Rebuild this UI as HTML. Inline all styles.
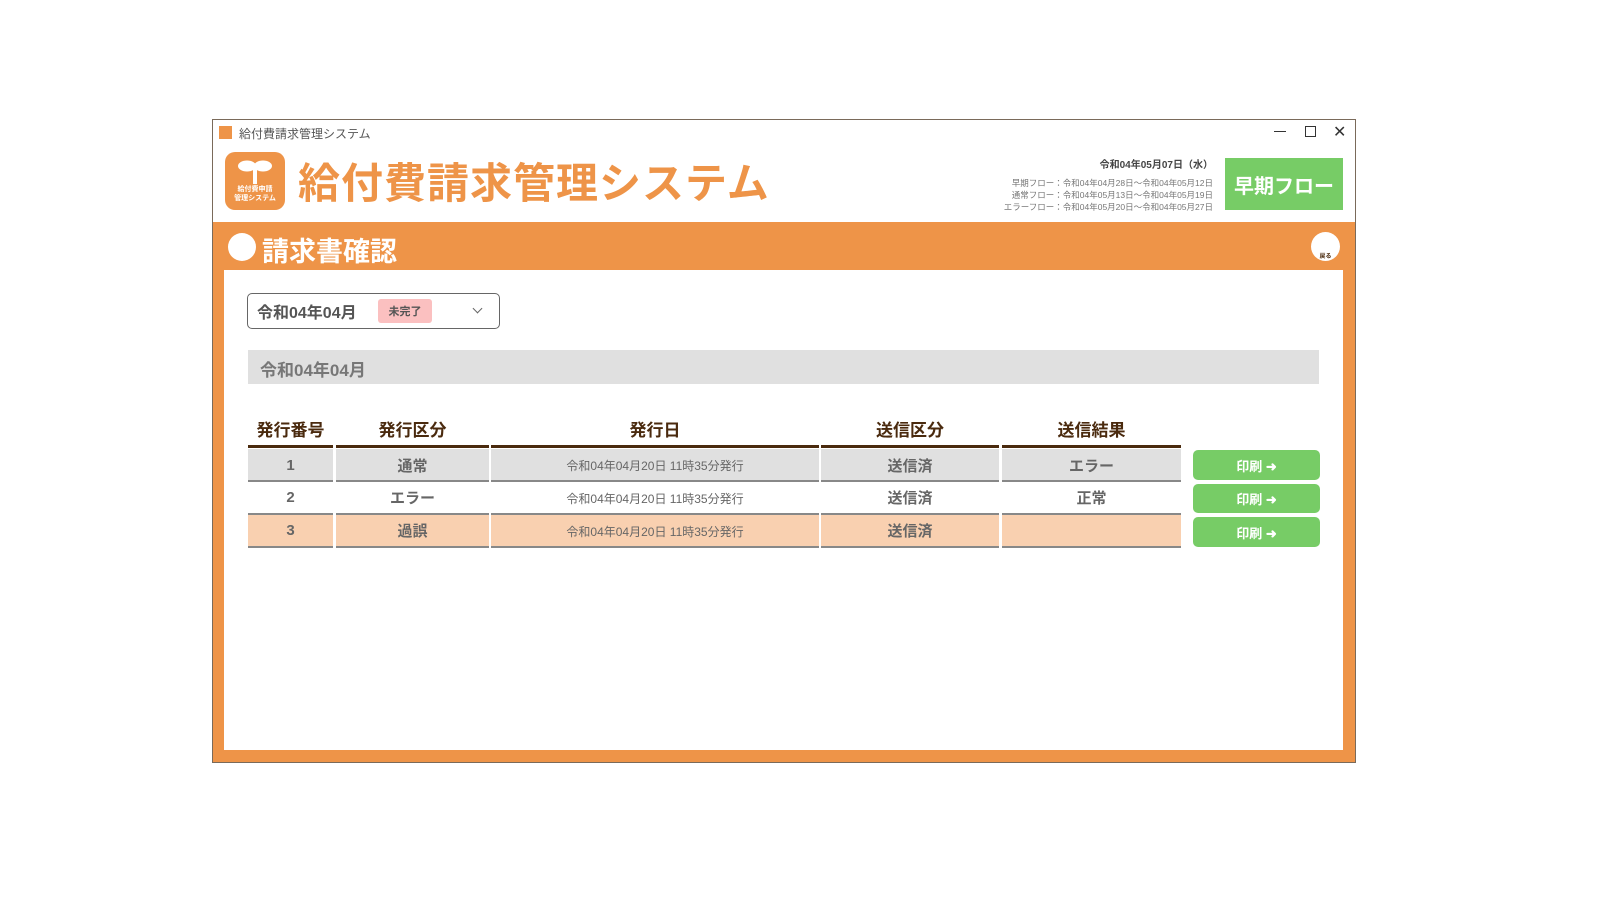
<!DOCTYPE html>
<html><head><meta charset="utf-8"><style>
*{margin:0;padding:0;box-sizing:border-box}
body{width:1600px;height:900px;background:#fff;position:relative;font-family:"Liberation Sans","Noto Sans CJK JP",sans-serif;overflow:hidden}
.a{position:absolute}
.win{left:212px;top:119px;width:1144px;height:644px;border:1px solid #7a6a5a;background:#fff}
.c{display:flex;align-items:center;justify-content:center;font-weight:bold}
.th{top:416px;height:24px;color:#4a2a0e;font-size:17px;font-weight:bold;text-align:center}
.hl{top:445px;height:3px;background:#4a2a0e}
.cell{position:absolute;display:flex;align-items:center;justify-content:center;color:#666;font-size:15px;font-weight:bold}
.d{font-weight:normal;font-size:12px;color:#666}
.btn{position:absolute;left:1193px;width:127px;background:#77cc66;border-radius:5px;color:#fff;font-size:13px;font-weight:bold;display:flex;align-items:center;justify-content:center}
</style></head><body>
<div class="a win"></div>
<div class="a" style="left:219px;top:126px;width:13px;height:13px;background:#ee9448"></div>
<div class="a" style="left:239px;top:125px;font-size:12px;color:#555">給付費請求管理システム</div>
<div class="a" style="left:1274px;top:131px;width:12px;height:1px;background:#333"></div>
<div class="a" style="left:1305px;top:126px;width:11px;height:11px;border:1px solid #333"></div>
<div class="a" style="left:1333px;top:122px;font-size:16px;color:#333">✕</div>
<div class="a c" style="left:225px;top:152px;width:60px;height:58px;background:#ee9448;border-radius:10px;flex-direction:column;color:#fff">
<svg width="36" height="26" viewBox="0 0 36 26"><ellipse cx="10" cy="7" rx="9" ry="5.5" fill="#fff"/><ellipse cx="26" cy="7" rx="9" ry="5.5" fill="#fff"/><rect x="16" y="6" width="4" height="19" fill="#fff"/></svg>
<div style="font-size:7px;line-height:9px;text-align:center">給付費申請<br>管理システム</div></div>
<div class="a" style="left:298px;top:150px;font-size:42px;font-weight:bold;color:#ee9448;letter-spacing:1px">給付費請求管理システム</div>
<div class="a" style="left:1000px;top:156px;width:213px;text-align:right;font-size:10px;font-weight:bold;color:#444">令和04年05月07日（水）</div>
<div class="a" style="left:980px;top:177px;width:233px;text-align:right;font-size:8.5px;line-height:12px;color:#777">早期フロー：令和04年04月28日～令和04年05月12日<br>通常フロー：令和04年05月13日～令和04年05月19日<br>エラーフロー：令和04年05月20日～令和04年05月27日</div>
<div class="a c" style="left:1225px;top:158px;width:118px;height:52px;background:#77cc66;color:#fff;font-size:20px">早期フロー</div>
<div class="a" style="left:213px;top:222px;width:1142px;height:540px;background:#ee9448"></div>
<div class="a" style="left:228px;top:233px;width:28px;height:28px;border-radius:50%;background:#fff"></div>
<div class="a" style="left:262px;top:230px;font-size:27px;font-weight:bold;color:#fff">請求書確認</div>
<div class="a" style="left:1311px;top:232px;width:29px;height:29px;border-radius:50%;background:#fff;font-size:6px;font-weight:bold;color:#4a2a0e;text-align:center;padding-top:19px">戻る</div>
<div class="a" style="left:224px;top:270px;width:1119px;height:480px;background:#fff"></div>
<div class="a" style="left:247px;top:293px;width:253px;height:36px;border:1px solid #666;border-radius:5px"></div>
<div class="a" style="left:257px;top:299px;font-size:16px;font-weight:bold;color:#555">令和04年04月</div>
<div class="a c" style="left:378px;top:299px;width:54px;height:24px;background:#fbc0c0;border-radius:3px;font-size:11px;color:#555">未完了</div>
<div class="a" style="left:474px;top:305px;width:7px;height:7px;border-right:1px solid #666;border-bottom:1px solid #666;transform:rotate(45deg)"></div>
<div class="a" style="left:248px;top:350px;width:1071px;height:34px;background:#e0e0e0"></div>
<div class="a" style="left:260px;top:356px;font-size:17px;font-weight:bold;color:#777">令和04年04月</div>
<div class="a th" style="left:248px;width:85px">発行番号</div>
<div class="a th" style="left:336px;width:153px">発行区分</div>
<div class="a th" style="left:491px;width:328px">発行日</div>
<div class="a th" style="left:821px;width:178px">送信区分</div>
<div class="a th" style="left:1002px;width:179px">送信結果</div>
<div class="a hl" style="left:248px;width:85px"></div><div class="a hl" style="left:336px;width:153px"></div><div class="a hl" style="left:491px;width:328px"></div><div class="a hl" style="left:821px;width:178px"></div><div class="a hl" style="left:1002px;width:179px"></div>
<div class="a" style="left:248px;top:449px;width:933px;height:32px;background:#e0e0e0"></div>
<div class="a" style="left:248px;top:515px;width:933px;height:31px;background:#f9d0b0"></div>
<div class="a" style="left:248px;top:480px;width:933px;height:2px;background:#888"></div>
<div class="a" style="left:248px;top:513px;width:933px;height:2px;background:#888"></div>
<div class="a" style="left:248px;top:546px;width:933px;height:2px;background:#888"></div>
<div class="a" style="left:333px;top:449px;width:3px;height:99px;background:#fff"></div>
<div class="a" style="left:489px;top:449px;width:2px;height:99px;background:#fff"></div>
<div class="a" style="left:819px;top:449px;width:2px;height:99px;background:#fff"></div>
<div class="a" style="left:999px;top:449px;width:3px;height:99px;background:#fff"></div>
<div class="cell" style="left:248px;top:449px;width:85px;height:32px">1</div>
<div class="cell" style="left:336px;top:449px;width:153px;height:32px">通常</div>
<div class="cell d" style="left:491px;top:449px;width:328px;height:32px">令和04年04月20日 11時35分発行</div>
<div class="cell" style="left:821px;top:449px;width:178px;height:32px">送信済</div>
<div class="cell" style="left:1002px;top:449px;width:179px;height:32px">エラー</div>
<div class="cell" style="left:248px;top:482px;width:85px;height:31px">2</div>
<div class="cell" style="left:336px;top:482px;width:153px;height:31px">エラー</div>
<div class="cell d" style="left:491px;top:482px;width:328px;height:33px">令和04年04月20日 11時35分発行</div>
<div class="cell" style="left:821px;top:482px;width:178px;height:31px">送信済</div>
<div class="cell" style="left:1002px;top:482px;width:179px;height:31px">正常</div>
<div class="cell" style="left:248px;top:515px;width:85px;height:31px">3</div>
<div class="cell" style="left:336px;top:515px;width:153px;height:31px">過誤</div>
<div class="cell d" style="left:491px;top:515px;width:328px;height:33px">令和04年04月20日 11時35分発行</div>
<div class="cell" style="left:821px;top:515px;width:178px;height:31px">送信済</div>
<div class="btn" style="top:450px;height:30px">印刷 ➜</div>
<div class="btn" style="top:484px;height:29px">印刷 ➜</div>
<div class="btn" style="top:517px;height:30px">印刷 ➜</div>
</body></html>
